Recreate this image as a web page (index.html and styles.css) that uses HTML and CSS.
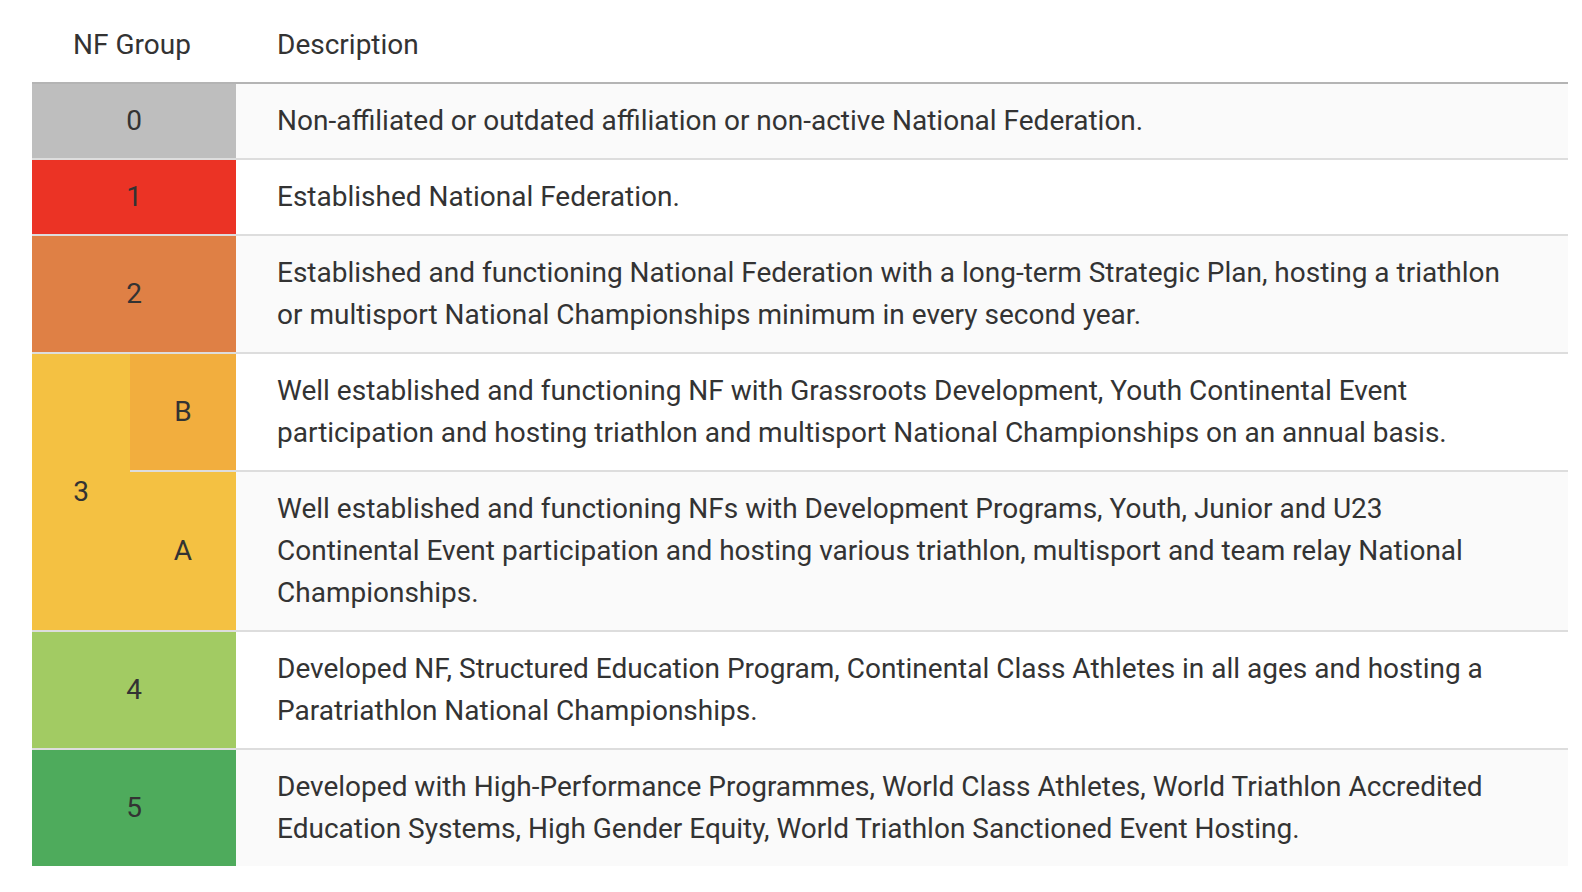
FILE: index.html
```html
<!DOCTYPE html>
<html lang="en">
<head>
<meta charset="utf-8">
<title>NF Groups</title>
<link rel="stylesheet" href="styles.css">
</head>
<body>
<div class="wrap">
<table class="nf-table">
  <colgroup>
    <col class="c-main">
    <col class="c-sub">
    <col class="c-desc">
  </colgroup>
  <thead>
    <tr>
      <th class="h-group" colspan="2">NF Group</th>
      <th class="h-desc">Description</th>
    </tr>
  </thead>
  <tbody>
    <tr class="odd">
      <td class="grp g0" colspan="2">0</td>
      <td class="desc">Non-affiliated or outdated affiliation or non-active National Federation.</td>
    </tr>
    <tr class="even">
      <td class="grp g1" colspan="2">1</td>
      <td class="desc">Established National Federation.</td>
    </tr>
    <tr class="odd">
      <td class="grp g2" colspan="2">2</td>
      <td class="desc">Established and functioning National Federation with a long-term Strategic Plan, hosting a triathlon or multisport National Championships minimum in every second year.</td>
    </tr>
    <tr class="even">
      <td class="grp g3" rowspan="2">3</td>
      <td class="grp g3b">B</td>
      <td class="desc">Well established and functioning NF with Grassroots Development, Youth Continental Event participation and hosting triathlon and multisport National Championships on an annual basis.</td>
    </tr>
    <tr class="odd">
      <td class="grp g3">A</td>
      <td class="desc">Well established and functioning NFs with Development Programs, Youth, Junior and U23 Continental Event participation and hosting various triathlon, multisport and team relay National Championships.</td>
    </tr>
    <tr class="even">
      <td class="grp g4" colspan="2">4</td>
      <td class="desc">Developed NF, Structured Education Program, Continental Class Athletes in all ages and hosting a Paratriathlon National Championships.</td>
    </tr>
    <tr class="odd last">
      <td class="grp g5" colspan="2">5</td>
      <td class="desc">Developed with High-Performance Programmes, World Class Athletes, World Triathlon Accredited Education Systems, High Gender Equity, World Triathlon Sanctioned Event Hosting.</td>
    </tr>
  </tbody>
</table>
</div>
</body>
</html>
```

FILE: styles.css
```css
html, body {
  margin: 0;
  padding: 0;
  background: #ffffff;
}

body {
  font-family: Roboto, "Liberation Sans", Arial, sans-serif;
  font-size: 28px;
  line-height: 42px;
  color: #333333;
}

.wrap {
  padding: 8px 14px 0 32px;
}

.nf-table {
  width: 100%;
  border-collapse: separate;
  border-spacing: 0;
  table-layout: fixed;
}

.c-main {
  width: 98px;
}

.c-sub {
  width: 106px;
}

.nf-table th {
  font-weight: normal;
  padding: 16px 0;
  border-bottom: 2px solid #b4b4b4;
  text-align: left;
}

.nf-table th.h-group {
  text-align: center;
  padding-right: 4px;
}

.nf-table th.h-desc {
  padding-left: 41px;
}

.nf-table td {
  padding: 16px 0;
  border-bottom: 2px solid #dddddd;
  vertical-align: middle;
}

.nf-table tr.last td {
  border-bottom: none;
}

.grp {
  text-align: center;
}

.nf-table td.desc {
  padding-left: 41px;
  padding-right: 40px;
}

tr.odd .desc {
  background: #fafafa;
}

tr.even .desc {
  background: #ffffff;
}

.g0 { background: #bebebe; }
.g1 { background: #eb3325; }
.g2 { background: #df8045; }
.g3 { background: #f4c142; }
.g3b { background: #f2ae3e; }
.g4 { background: #a2cb63; }
.g5 { background: #4eab5c; }
```
